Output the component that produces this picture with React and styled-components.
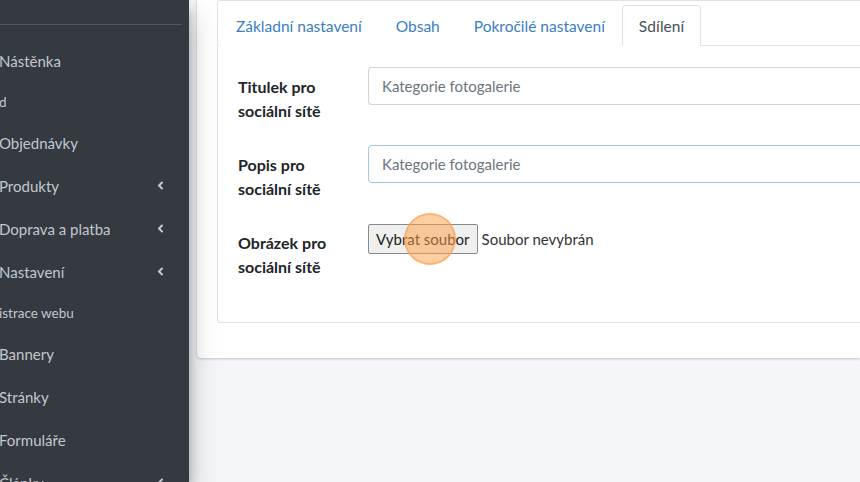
import React from "react";
import styled, { createGlobalStyle } from "styled-components";
import { FaAngleLeft } from "react-icons/fa";

const GlobalStyle = createGlobalStyle`
  html, body {
    margin: 0;
    padding: 0;
    height: 100%;
    overflow: hidden;
    background: #f4f6f9;
    font-family: "Lato", "Liberation Sans", sans-serif;
  }
  * { box-sizing: border-box; }
`;

const menu = [
  { label: "Nástěnka" },
  { label: "d", small: true },
  { label: "Objednávky" },
  { label: "Produkty", sub: true },
  { label: "Doprava a platba", sub: true },
  { label: "Nastavení", sub: true },
  { label: "istrace webu", small: true },
  { label: "Bannery" },
  { label: "Stránky" },
  { label: "Formuláře" },
  { label: "Články", sub: true },
];

const fields = [
  { label: "Titulek pro sociální sítě", type: "text" },
  { label: "Popis pro sociální sítě", type: "text", focused: true },
  { label: "Obrázek pro sociální sítě", type: "file" },
];

const App = () => {
  return (
    <>
      <GlobalStyle />
      <Layout>
        <Sidebar>
          <Divider />
          <Nav>
            {menu.map((item) => (
              <NavItem key={item.label} $small={item.small}>
                <span>{item.label}</span>
                {item.sub && <FaAngleLeft size={13} />}
              </NavItem>
            ))}
          </Nav>
        </Sidebar>
        <Main>
          <OuterCard>
            <TabCard>
              <TabHeader>
                <Tab>Základní nastavení</Tab>
                <Tab>Obsah</Tab>
                <Tab>Pokročilé nastavení</Tab>
                <Tab $active>Sdílení</Tab>
              </TabHeader>
              <TabBody>
                {fields.map((f) => (
                  <FormRow key={f.label}>
                    <Label>{f.label}</Label>
                    {f.type === "file" ? (
                      <FileField>
                        <FileButton>Vybrat soubor</FileButton>
                        <FileName>Soubor nevybrán</FileName>
                        <ClickMark />
                      </FileField>
                    ) : (
                      <Input $focused={f.focused}>Kategorie fotogalerie</Input>
                    )}
                  </FormRow>
                ))}
              </TabBody>
            </TabCard>
          </OuterCard>
        </Main>
      </Layout>
    </>
  );
};

const Layout = styled.div`
  display: flex;
  width: 860px;
  height: 482px;
  overflow: hidden;
`;

const Sidebar = styled.aside`
  width: 189px;
  flex-shrink: 0;
  background: #343a40;
  box-shadow: 0 14px 28px rgba(0, 0, 0, 0.25), 0 10px 10px rgba(0, 0, 0, 0.22);
  position: relative;
  z-index: 2;
  padding-top: 24px;
`;

const Divider = styled.div`
  height: 1px;
  margin-right: 7px;
  background: #4f5962;
`;

const Nav = styled.nav`
  display: flex;
  flex-direction: column;
  padding-top: 14px;
`;

const NavItem = styled.div`
  display: flex;
  align-items: center;
  justify-content: space-between;
  height: ${(p) => (p.$small ? "39px" : "43px")};
  margin-left: -1px;
  padding-right: 22px;
  color: #c2c7d0;
  font-size: ${(p) => (p.$small ? "13.5px" : "15px")};
  white-space: nowrap;

  svg {
    color: #c2c7d0;
  }
`;

const Main = styled.main`
  flex: 1;
  padding-left: 8px;
  background: #f4f6f9;
`;

const OuterCard = styled.div`
  margin-top: -20px;
  padding: 20px 0 20px 20px;
  background: #fff;
  border-radius: 4px 0 0 4px;
  box-shadow: 0 0 1px rgba(0, 0, 0, 0.125), 0 1px 3px rgba(0, 0, 0, 0.2);
`;

const TabCard = styled.div`
  margin-bottom: 15px;
  border: 1px solid #dee2e6;
  border-right: none;
  border-radius: 4px 0 0 4px;
  background: #fff;
`;

const TabHeader = styled.div`
  display: flex;
  padding: 4px 0 0 1px;
  border-bottom: 1px solid #dee2e6;
`;

const Tab = styled.div`
  height: 41px;
  margin-bottom: -1px;
  padding: 0 16px;
  display: flex;
  align-items: center;
  font-size: 15.5px;
  color: ${(p) => (p.$active ? "#495057" : "#3a7ec6")};
  border: 1px solid ${(p) => (p.$active ? "#dee2e6" : "transparent")};
  border-bottom-color: ${(p) => (p.$active ? "#fff" : "transparent")};
  border-radius: 4px 4px 0 0;
  background: #fff;
`;

const TabBody = styled.div`
  padding: 21px 0 21px 20px;
`;

const FormRow = styled.div`
  display: flex;
  gap: 15px;
  margin-bottom: 16px;
`;

const Label = styled.div`
  width: 115px;
  flex-shrink: 0;
  padding: 8px 0 6px;
  font-size: 16px;
  font-weight: 700;
  line-height: 24px;
  color: #212529;
`;

const Input = styled.div`
  flex: 1;
  height: 38px;
  padding: 0 13px;
  display: flex;
  align-items: center;
  font-size: 15px;
  color: #6c757d;
  border: 1px solid ${(p) => (p.$focused ? "#a9c6e0" : "#ced4da")};
  border-right: none;
  border-radius: 4px 0 0 4px;
`;

const FileField = styled.div`
  position: relative;
  display: flex;
  align-items: center;
  gap: 4px;
  height: 31px;
`;

const FileButton = styled.div`
  height: 30px;
  padding: 0 7px;
  display: flex;
  align-items: center;
  font-size: 15px;
  color: #222;
  background: #efefef;
  border: 1px solid #8a8a8a;
  border-radius: 2px;
`;

const FileName = styled.span`
  font-size: 15px;
  color: #333;
`;

const ClickMark = styled.div`
  position: absolute;
  left: 36px;
  top: -10px;
  width: 52px;
  height: 52px;
  border-radius: 50%;
  background: rgba(255, 160, 70, 0.5);
  border: 2px solid rgba(245, 160, 80, 0.55);
`;

export default App;
